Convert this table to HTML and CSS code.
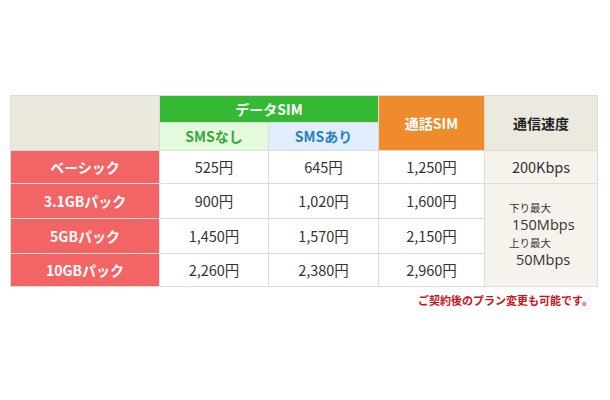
FILE: index.html
```html
<!DOCTYPE html>
<html lang="ja">
<head>
<meta charset="utf-8">
<link rel="stylesheet" href="styles.css">
</head>
<body>
<div class="wrap">
<table class="plans">
  <colgroup>
    <col class="c1"><col class="c2"><col class="c3"><col class="c4"><col class="c5">
  </colgroup>
  <thead>
    <tr class="h1">
      <th rowspan="2" class="blank"></th>
      <th colspan="2" class="data">データSIM</th>
      <th rowspan="2" class="voice">通話SIM</th>
      <th rowspan="2" class="speedh">通信速度</th>
    </tr>
    <tr class="h2">
      <th class="nosms">SMSなし</th>
      <th class="sms">SMSあり</th>
    </tr>
  </thead>
  <tbody>
    <tr class="r1">
      <th class="plan">ベーシック</th>
      <td>525円</td><td>645円</td><td>1,250円</td>
      <td class="speed">200Kbps</td>
    </tr>
    <tr class="r2">
      <th class="plan">3.1GBパック</th>
      <td>900円</td><td>1,020円</td><td>1,600円</td>
      <td rowspan="3" class="speed">
        <div class="sp">
          <span class="lbl">下り最大</span>
          <span class="val">150Mbps</span>
          <span class="lbl">上り最大</span>
          <span class="val v2">50Mbps</span>
        </div>
      </td>
    </tr>
    <tr class="r3">
      <th class="plan">5GBパック</th>
      <td>1,450円</td><td>1,570円</td><td>2,150円</td>
    </tr>
    <tr class="r4">
      <th class="plan">10GBパック</th>
      <td>2,260円</td><td>2,380円</td><td>2,960円</td>
    </tr>
  </tbody>
</table>
<p class="note">ご契約後のプラン変更も可能です。</p>
</div>
</body>
</html>
```
FILE: styles.css
```css
html, body {
  margin: 0;
  padding: 0;
  background: #fff;
}
body {
  font-family: "Noto Sans CJK JP", "Noto Sans", sans-serif;
  color: #333;
}
.wrap {
  padding: 95px 0 0 10px;
  width: 587px;
}
.plans {
  border-collapse: collapse;
  table-layout: fixed;
  width: 587px;
  font-size: 14px;
}
.c1 { width: 149px; }
.c2 { width: 109px; }
.c3 { width: 110px; }
.c4 { width: 106px; }
.c5 { width: 113px; }
.plans th, .plans td {
  border: 1px solid #dcdcdc;
  text-align: center;
  vertical-align: middle;
  padding: 0;
  line-height: 1.2;
}
.plans th { font-weight: bold; }
.h1 { height: 27px; }
.h2 { height: 28px; }
.r1 { height: 33px; }
.r2 { height: 35px; }
.r3 { height: 35px; }
.r4 { height: 33px; }
.blank { background: #ebe9dd; }
.data { background: #34ba32; color: #fff; }
.voice { background: #ef8b2b; color: #fff; }
.speedh { background: #ece9de; color: #222; }
.nosms { background: #e3fadd; color: #3aa63a; }
.sms { background: #e1eefb; color: #2a7fc4; }
.plan { background: #f36464; color: #fff; }
.plans td { background: #fff; color: #333; font-size: 14.5px; }
.plans td.speed { background: #f6f3ec; }
.sp {
  display: flex;
  flex-direction: column;
  align-items: flex-start;
  padding-left: 24px;
}
.lbl { font-size: 10.5px; line-height: 15px; }
.val {
  font-family: "Open Sans", "Noto Sans", sans-serif;
  font-size: 14.5px;
  line-height: 20px;
  padding-left: 3px;
}
.v2 { padding-left: 7px; }
.note {
  margin: 5px 0 0;
  text-align: right;
  padding-right: 4px;
  color: #c8141b;
  font-weight: bold;
  font-size: 11px;
}
```
